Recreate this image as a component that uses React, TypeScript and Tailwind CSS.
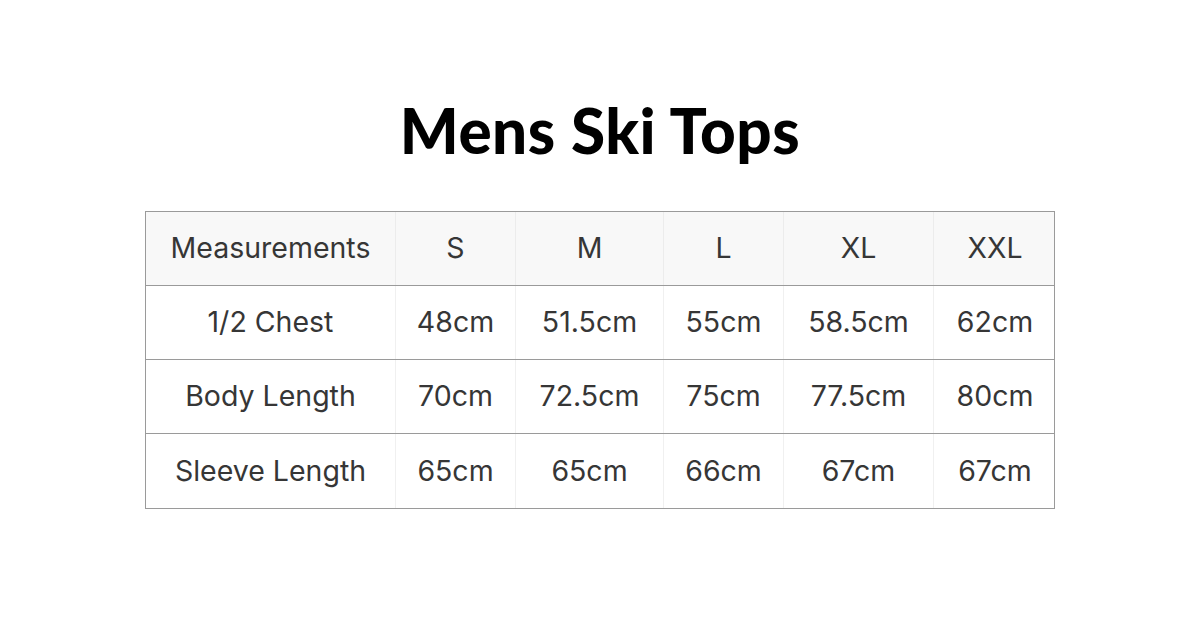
import React from "react";

const sizes = ["S", "M", "L", "XL", "XXL"];

const rows = [
  { label: "1/2 Chest", values: ["48cm", "51.5cm", "55cm", "58.5cm", "62cm"] },
  { label: "Body Length", values: ["70cm", "72.5cm", "75cm", "77.5cm", "80cm"] },
  { label: "Sleeve Length", values: ["65cm", "65cm", "66cm", "67cm", "67cm"] },
];

const cols = "grid grid-cols-[250px_120px_148px_120px_150px_122px]";

const App: React.FC = () => {
  return (
    <div className="w-[1200px] h-[628px] bg-white flex flex-col items-center">
      <h1
        className="mt-[91px] text-[62px] leading-[78px] font-black text-black tracking-[0.5px]"
        style={{ fontFamily: "Lato, sans-serif" }}
      >
        Mens Ski Tops
      </h1>

      <div
        className="mt-[42px] w-[910px] border border-[#9a9a9a] text-[28.5px] text-[#363636]"
        style={{ fontFamily: "Inter, 'Liberation Sans', sans-serif" }}
      >
        <div className={`${cols} h-[74px] bg-[#f8f8f8] border-b border-[#9a9a9a]`}>
          <div className="flex items-center justify-center border-r border-[#ececec]">Measurements</div>
          {sizes.map((s, i) => (
            <div
              key={s}
              className={`flex items-center justify-center ${i < sizes.length - 1 ? "border-r border-[#ececec]" : ""}`}
            >
              {s}
            </div>
          ))}
        </div>
        {rows.map((r, ri) => (
          <div
            key={r.label}
            className={`${cols} h-[74px] ${ri < rows.length - 1 ? "border-b border-[#9a9a9a]" : ""}`}
          >
            <div className="flex items-center justify-center border-r border-[#f0f0f0]">{r.label}</div>
            {r.values.map((v, i) => (
              <div
                key={i}
                className={`flex items-center justify-center ${i < r.values.length - 1 ? "border-r border-[#f0f0f0]" : ""}`}
              >
                {v}
              </div>
            ))}
          </div>
        ))}
      </div>
    </div>
  );
};

export default App;
